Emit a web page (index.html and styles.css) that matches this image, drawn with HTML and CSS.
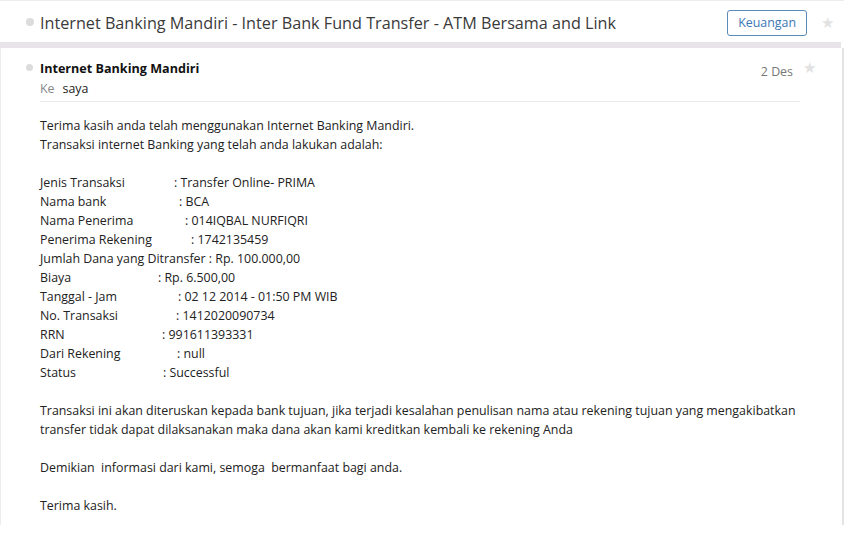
FILE: index.html
```html
<!DOCTYPE html>
<html>
<head>
<meta charset="utf-8">
<link rel="stylesheet" href="styles.css">
</head>
<body>
<div class="page">
  <div class="subject-bar">
    <span class="dot"></span>
    <h1 class="subject">Internet Banking Mandiri - Inter Bank Fund Transfer - ATM Bersama and Link</h1>
    <span class="label">Keuangan</span>
    <span class="star">&#9733;</span>
  </div>
  <div class="band"></div>
  <div class="card">
    <div class="msg-head">
      <span class="dot dot-small"></span>
      <div class="who">
        <div class="sender">Internet Banking Mandiri</div>
        <div class="to"><span class="ke">Ke</span><span class="me">saya</span></div>
      </div>
      <span class="date">2 Des</span>
      <span class="star2">&#9733;</span>
    </div>
    <div class="body">
      <p>Terima kasih anda telah menggunakan Internet Banking Mandiri.<br>Transaksi internet Banking yang telah anda lakukan adalah:</p>
      <div class="rows">
        <div><span class="k w1">Jenis Transaksi</span>: Transfer Online- PRIMA</div>
        <div><span class="k w2">Nama bank</span>: BCA</div>
        <div><span class="k w3">Nama Penerima</span>: 014IQBAL NURFIQRI</div>
        <div><span class="k w4">Penerima Rekening</span>: 1742135459</div>
        <div>Jumlah Dana yang Ditransfer : Rp. 100.000,00</div>
        <div><span class="k w6">Biaya</span>: Rp. 6.500,00</div>
        <div><span class="k w7">Tanggal - Jam</span>: 02 12 2014 - 01:50 PM WIB</div>
        <div><span class="k w8">No. Transaksi</span>: 1412020090734</div>
        <div><span class="k w9">RRN</span>: 991611393331</div>
        <div><span class="k w10">Dari Rekening</span>: null</div>
        <div><span class="k w11">Status</span>: Successful</div>
      </div>
      <p>Transaksi ini akan diteruskan kepada bank tujuan, jika terjadi kesalahan penulisan nama atau rekening tujuan yang mengakibatkan<br>transfer tidak dapat dilaksanakan maka dana akan kami kreditkan kembali ke rekening Anda</p>
      <p>Demikian&nbsp; informasi dari kami, semoga&nbsp; bermanfaat bagi anda.</p>
      <p>Terima kasih.</p>
    </div>
  </div>
</div>
</body>
</html>
```
FILE: styles.css
```css
html, body {
  margin: 0;
  padding: 0;
  background: #fff;
}
body {
  font-family: "Open Sans", "Noto Sans", sans-serif;
  color: #222;
  width: 852px;
  height: 552px;
  overflow: hidden;
}
.page {
  width: 844px;
}
.subject-bar {
  height: 42px;
  border-top: 1px solid #ededed;
  box-sizing: border-box;
  display: flex;
  align-items: center;
  padding-left: 26px;
}
.dot {
  width: 8px;
  height: 8px;
  border-radius: 50%;
  background: #dcdcdc;
  flex: none;
}
.subject {
  margin: 0 0 0 6px;
  font-weight: normal;
  font-size: 16.2px;
  color: #3a3a3a;
  white-space: nowrap;
  flex: 1;
  position: relative;
  top: 1px;
}
.label {
  border: 1px solid #5b8bb8;
  border-radius: 3px;
  color: #3b78b4;
  font-size: 12.4px;
  padding: 3px 10px 4px;
  margin-right: 14px;
  position: relative;
  top: 1px;
}
.star {
  color: #e2e2e2;
  font-size: 15px;
  margin-right: 10px;
}
.band {
  height: 6px;
  background: #e8e4ea;
  margin-right: 3px;
}
.card {
  border-left: 1px solid #ececec;
  border-right: 2px solid #e4e4e4;
  height: 477px;
  box-sizing: border-box;
  padding: 0 0 0 39px;
}
.msg-head {
  position: relative;
  display: flex;
  align-items: flex-start;
  margin-right: 42px;
  border-bottom: 1px solid #ebebeb;
  padding-top: 12px;
  height: 54px;
  box-sizing: border-box;
}
.dot-small {
  position: absolute;
  left: -14px;
  top: 16px;
  width: 7px;
  height: 7px;
}
.who {
  flex: 1;
}
.sender {
  font-weight: bold;
  font-size: 12.6px;
  color: #111;
  line-height: 18px;
}
.to {
  font-size: 12.4px;
  line-height: 19px;
  margin-top: 1px;
}
.ke {
  color: #888;
}
.me {
  margin-left: 8px;
  color: #222;
}
.date {
  color: #777;
  font-size: 12.4px;
  margin-top: 3px;
  margin-right: 7px;
}
.star2 {
  position: absolute;
  right: -16px;
  top: 9px;
  color: #e2e2e2;
  font-size: 15px;
}
.body {
  font-size: 12.4px;
  line-height: 19px;
  padding-top: 14px;
}
.body p {
  margin: 0 0 19px;
  white-space: nowrap;
}
.rows {
  margin-bottom: 19px;
}
.k {
  display: inline-block;
}
.w1 { width: 134px; }
.w2 { width: 139px; }
.w3 { width: 145px; }
.w4 { width: 151px; }
.w6 { width: 118px; }
.w7 { width: 138px; }
.w8 { width: 136px; }
.w9 { width: 122px; }
.w10 { width: 137px; }
.w11 { width: 123px; }
```
